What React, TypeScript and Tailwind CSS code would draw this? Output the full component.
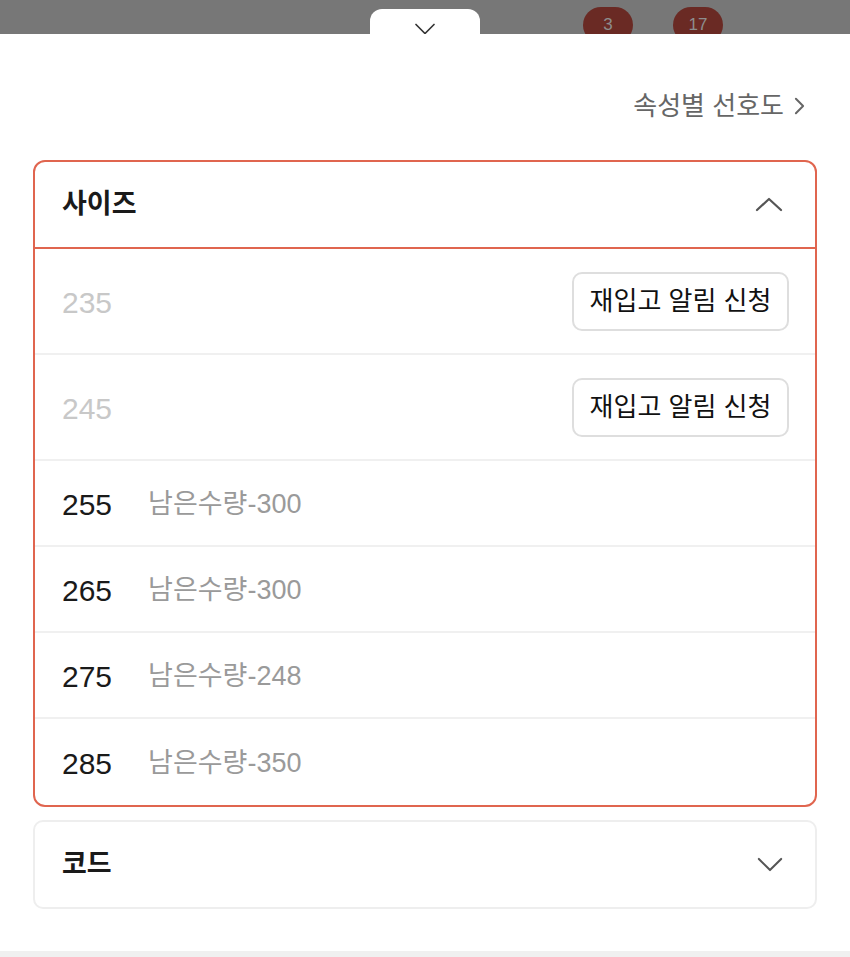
const sizes = [
  { size: "235", soldOut: true },
  { size: "245", soldOut: true },
  { size: "255", left: 300 },
  { size: "265", left: 300 },
  { size: "275", left: 248 },
  { size: "285", left: 350 },
];

function Chevron({ dir, className }: { dir: "up" | "down" | "right"; className?: string }) {
  const d =
    dir === "up" ? "M2 13 L14 2 L26 13" : dir === "down" ? "M2 2 L14 14 L26 2" : "M2 2 L10 10 L2 18";
  const box = dir === "right" ? "0 0 12 20" : "0 0 28 16";
  return (
    <svg viewBox={box} className={className} fill="none" stroke="currentColor" strokeWidth={2.2} strokeLinecap="round" strokeLinejoin="round">
      <path d={d} />
    </svg>
  );
}

export default function App() {
  return (
    <div
      className="w-[850px] h-[957px] bg-white flex flex-col overflow-hidden"
      style={{ fontFamily: '"Liberation Sans", "Noto Sans CJK KR", sans-serif' }}
    >
      {/* dimmed page behind the sheet */}
      <div className="relative h-[34px] shrink-0 bg-[#777777] overflow-hidden">
        <div className="absolute left-[370px] top-[9px] w-[110px] h-[30px] bg-white rounded-t-[12px] flex justify-center pt-[14px]">
          <Chevron dir="down" className="w-[30px] h-[12px] text-[#333]" />
        </div>
        <div className="absolute left-[583px] top-[7px] w-[50px] h-[36px] rounded-full bg-[#6a2a24] flex justify-center pt-[5px] text-[17px] text-[#8d8d8d]">
          3
        </div>
        <div className="absolute left-[673px] top-[7px] w-[50px] h-[36px] rounded-full bg-[#6a2a24] flex justify-center pt-[5px] text-[17px] text-[#8d8d8d]">
          17
        </div>
      </div>

      <div className="flex justify-end items-center pt-[55px] pr-[45px] gap-[10px] text-[#666]">
        <span className="text-[26px] leading-[34px]">속성별 선호도</span>
        <Chevron dir="right" className="w-[11px] h-[18px]" />
      </div>

      <div className="mx-[33px] mt-[37px] border-2 border-[#e0654f] rounded-[12px] flex flex-col">
        <div className="h-[87px] flex items-center justify-between pl-[27px] pr-[32px] border-b-2 border-[#e0654f]">
          <span className="text-[27px] font-semibold text-[#1a1a1a]">사이즈</span>
          <Chevron dir="up" className="w-[28px] h-[16px] text-[#555]" />
        </div>
        {sizes.map((s, i) => (
          <div
            key={s.size}
            className={
              (s.soldOut ? "h-[106px] " : "h-[86px] ") +
              "flex items-center justify-between pl-[27px] pr-[26px] " +
              (i < sizes.length - 1 ? "border-b-2 border-[#f0f0f0]" : "")
            }
          >
            <div className="flex items-center gap-[36px] pt-[3px]">
              <span className={"text-[30px] " + (s.soldOut ? "text-[#c8c8c8]" : "text-[#1a1a1a]")}>{s.size}</span>
              {!s.soldOut && <span className="text-[27px] text-[#9a9a9a]">남은수량-{s.left}</span>}
            </div>
            {s.soldOut && (
              <button className="w-[217px] h-[59px] border-2 border-[#dedede] rounded-[10px] bg-white text-[26px] text-[#111]">
                재입고 알림 신청
              </button>
            )}
          </div>
        ))}
      </div>

      <div className="mx-[33px] mt-[13px] h-[89px] border-2 border-[#eeeeee] rounded-[10px] flex items-center justify-between pl-[27px] pr-[32px]">
        <span className="text-[27px] font-semibold text-[#1a1a1a]">코드</span>
        <Chevron dir="down" className="w-[26px] h-[15px] text-[#555]" />
      </div>

      <div className="mt-auto h-[6px] bg-[#f0f0f0]" />
    </div>
  );
}
